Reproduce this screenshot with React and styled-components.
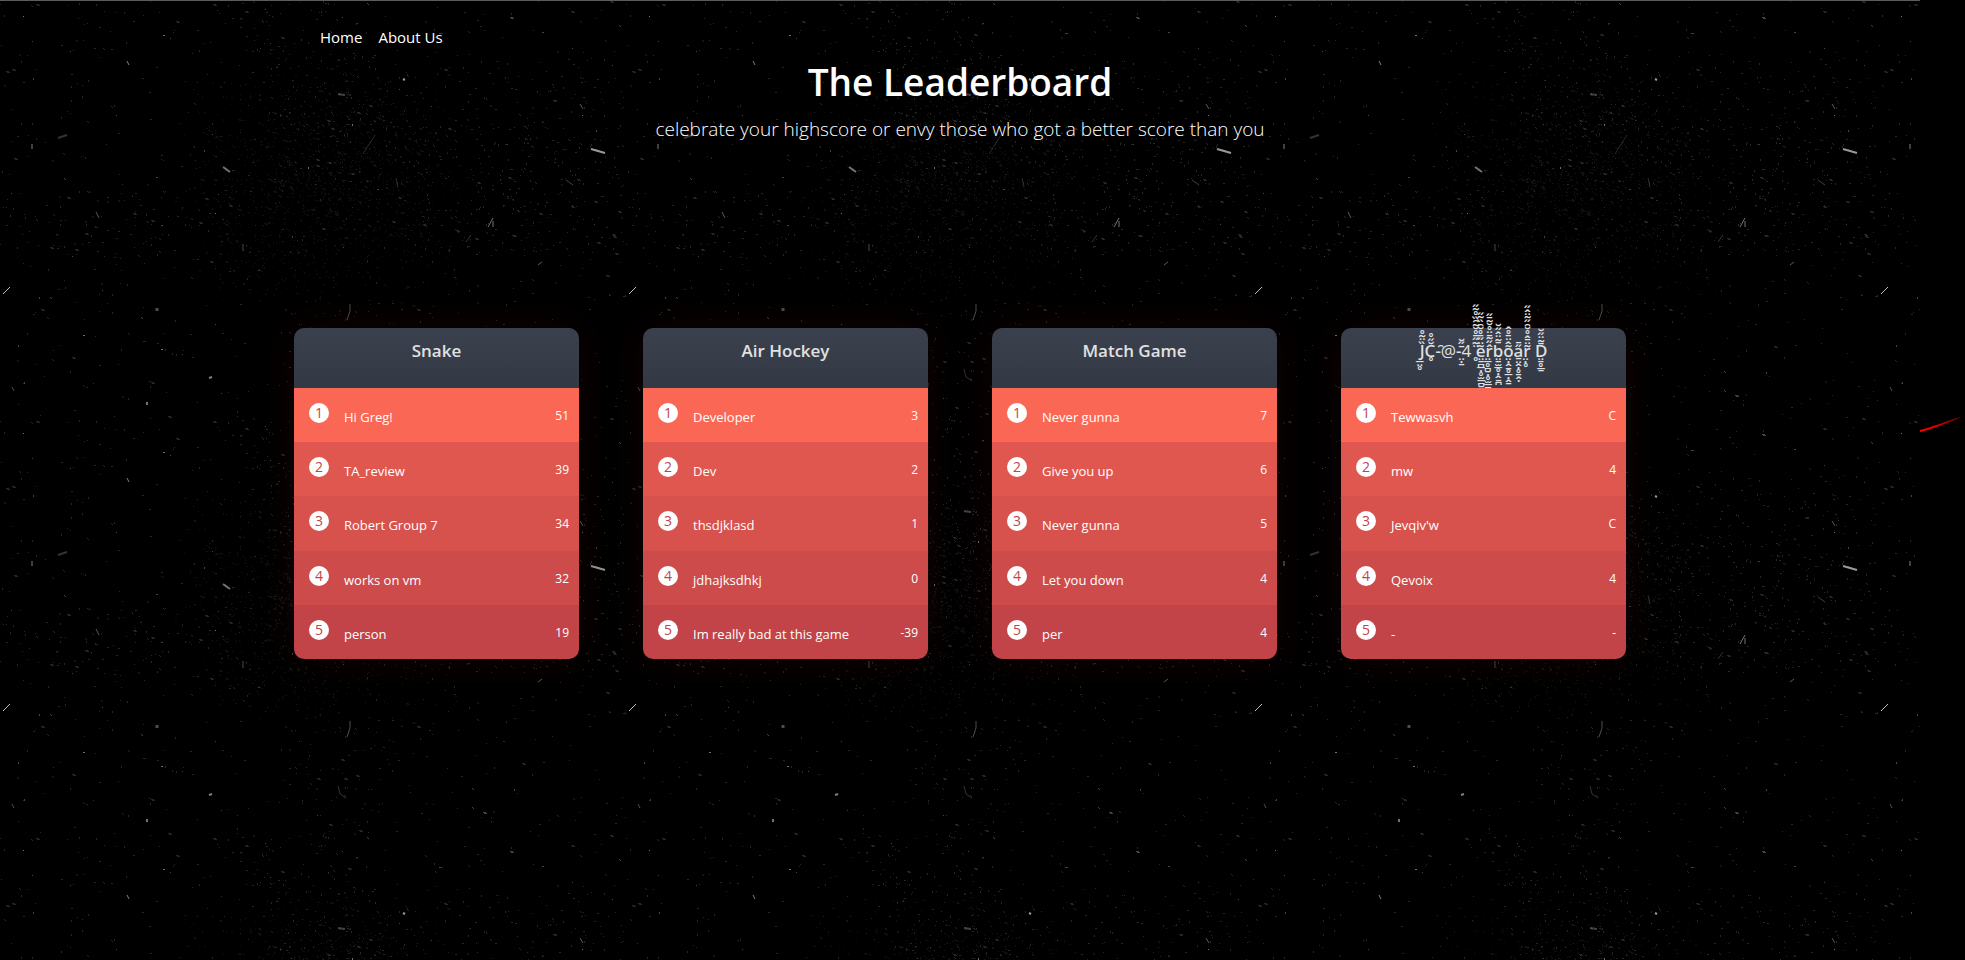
import React from "react";
import styled, { createGlobalStyle } from "styled-components";

const GlobalStyle = createGlobalStyle`
  *, *::before, *::after { box-sizing: border-box; }
  body { margin: 0; background: #000; color: #fff; font-family: "Segoe UI", "Open Sans", "Noto Sans", sans-serif; font-size: 16px; line-height: 24px; }
  #root { isolation: isolate; }
`;

const TILE_W = 626;
const TILE_H = 417;

function seeded(seed) {
  let s = seed;
  return () => {
    s = (s * 1664525 + 1013904223) % 4294967296;
    return s / 4294967296;
  };
}

function specks(seed, count, x, y, w, h, soft) {
  const rnd = seeded(seed);
  const spread = () => (soft ? (rnd() + rnd()) / 2 : rnd());
  let d = "";
  for (let i = 0; i < count; i += 1) {
    const px = Math.floor(x + spread() * w);
    const py = Math.floor(y + spread() * h);
    const shape = rnd();
    if (shape < 0.5) d += `M${px} ${py}h1v1h-1z`;
    else if (shape < 0.68) d += `M${px} ${py}h2v1h-2z`;
    else if (shape < 0.84) d += `M${px} ${py}h1v2h-1z`;
    else if (shape < 0.95) d += `M${px} ${py}h1v1h-1zM${px + 1} ${py + 1}h1v1h-1z`;
    else d += `M${px} ${py}h3v1h-3zM${px + 1} ${py + 1}h3v1h-3z`;
  }
  return d;
}

const DUST = [
  { fill: "#101010", d: specks(45, 1500, 170, 60, 300, 250, true) },
  { fill: "#262626", d: specks(7, 620, 0, 0, TILE_W, TILE_H) },
  { fill: "#262626", d: specks(21, 260, 400, 125, 226, 130) },
  { fill: "#262626", d: specks(27, 90, 360, 60, 266, 80) },
  { fill: "#262626", d: specks(33, 130, 250, 30, 150, 170, true) },
  { fill: "#262626", d: specks(36, 50, 240, 0, 110, 70) },
  { fill: "#262626", d: specks(39, 90, 0, 190, 230, 70) },
  { fill: "#262626", d: specks(41, 60, 280, 310, 120, 107) },
  { fill: "#444444", d: specks(58, 50, 0, 0, TILE_W, TILE_H) },
  { fill: "#707070", d: specks(64, 8, 0, 0, TILE_W, TILE_H) },
];

const SCRATCHES = [
  { d: "M3 293L10 286", o: 0.75, w: 1 },
  { d: "M591 148L605 152", o: 0.6, w: 2 },
  { d: "M223 166L230 171", o: 0.45, w: 2 },
  { d: "M127 60L129 64", o: 0.5, w: 1 },
  { d: "M488 226L493 217M493 226V220", o: 0.45, w: 1 },
  { d: "M347 319L350 310V303", o: 0.3, w: 1 },
  { d: "M32 143V148", o: 0.5, w: 1 },
  { d: "M96 211L99 217", o: 0.35, w: 1 },
  { d: "M157 307V310", o: 0.3, w: 3 },
  { d: "M338 93L345 94", o: 0.25, w: 2 },
  { d: "M580 103L583 108", o: 0.35, w: 1 },
  { d: "M243 250V243", o: 0.25, w: 1 },
  { d: "M209 377L212 376", o: 0.5, w: 2 },
  { d: "M58 137L67 134", o: 0.2, w: 2 },
  { d: "M363 153L375 134", o: 0.15, w: 1 },
  { d: "M566 179L573 184", o: 0.25, w: 1 },
  { d: "M466 241L471 234", o: 0.2, w: 1 },
  { d: "M338 368L340 376L346 380", o: 0.2, w: 1 },
  { d: "M396 177L398 186", o: 0.18, w: 1 },
  { d: "M147 404V401", o: 0.45, w: 2 },
  { d: "M538 264L542 261", o: 0.35, w: 1 },
  { d: "M12 386L14 390", o: 0.3, w: 1 },
  { d: "M403 78L405 79", o: 0.6, w: 2 },
];

const Page = styled.div`
  position: relative;
  min-height: 100vh;
  padding-right: 45px;
`;

const Backdrop = styled.div`
  position: absolute;
  inset: 0 45px 0 0;
  z-index: -1;
  border-top: 1px solid #5c5c5c;

  > svg { display: block; width: 100%; height: 100%; }
`;

const Comet = styled.svg`
  position: absolute;
  right: 0;
  top: 416px;
  width: 45px;
  height: 18px;
`;

const Nav = styled.nav`
  display: flex;
  gap: 16px;
  width: 100%;
  max-width: 1320px;
  margin: 0 auto;
  padding: 25px 20px 0;
`;

const NavLink = styled.a`
  color: #fff;
  font-size: 15px;
  text-decoration: none;
`;

const Heading = styled.header`
  padding-top: 9px;
  text-align: center;
`;

const Title = styled.h1`
  margin: 0 0 8px;
  font-size: 37px;
  font-weight: 600;
  line-height: 48px;
`;

const Lead = styled.p`
  margin: 0;
  font-size: 19px;
  font-weight: 300;
  line-height: 30px;
`;

const Boards = styled.main`
  display: flex;
  justify-content: center;
  gap: 64px;
  padding: 184px 20px 60px;
`;

const Board = styled.section`
  flex: 0 1 285px;
  border-radius: 10px;
  box-shadow: 0 0 40px rgba(62, 9, 11, 0.3);
`;

const BoardHead = styled.div`
  height: 60px;
  padding-top: 11px;
  border-radius: 10px 10px 0 0;
  background: linear-gradient(to bottom, #3a404d, #333944);
`;

const BoardTitle = styled.h2`
  margin: 0;
  color: #e1e1e1;
  font-size: 17px;
  font-weight: ${(p) => (p.$plain ? 500 : 600)};
  line-height: 24px;
  text-align: center;
`;

const Rows = styled.ol`
  position: relative;
  display: grid;
  grid-template-rows: repeat(5, 1fr);
  height: 271px;
  margin: 0;
  padding: 0;
  list-style: none;
  overflow: hidden;
  border-radius: 0 0 10px 10px;
`;

const SHADES = ["#fa6855", "#e0574f", "#d7514d", "#cd4b4b", "#c24448"];

const Row = styled.li`
  display: flex;
  align-items: center;
  padding: 0 10px 0 15px;
  background: ${(p) => SHADES[p.$rank - 1]};
  color: #fff;
`;

const Rank = styled.span`
  flex: none;
  width: 20px;
  height: 20px;
  margin: 0 15px 4px 0;
  border-radius: 50%;
  background: #fff;
  color: #c24448;
  font-size: 14px;
  line-height: 20px;
  text-align: center;
`;

const Player = styled.span`
  flex: 1;
  min-width: 0;
  padding-top: 4px;
  font-size: 13px;
  font-weight: 500;
  line-height: 20px;
`;

const Score = styled.span`
  padding-top: 2px;
  font-size: 12px;
  font-weight: 500;
  line-height: 20px;
`;

const GLITCH =
  "J\u030f\u0308\u0303\u0332\u0324\u030a\u0325C\u0306\u030b\u030a\u0325-\u0311@-\u0304\u030b\u0306\u0324\u0323\u0331" +
  "4\u00a0\u0308\u0303\u030b\u0304\u030a\u0306\u0303\u0311\u030f\u030a\u0303\u030b\u0325" +
  "e\u0303\u0308\u030b\u0304\u030a\u0306\u0311\u030f\u0303\u030b\u0324\u0331\u032a\u0332\u0323\u0325\u032b\u0332\u032a\u0331\u0325" +
  "r\u0302\u030b\u0303\u0304\u0308\u030a\u0306\u0303\u0304\u030b\u0324\u0332\u0325\u032a\u0331\u0323\u0325\u032b\u0332\u032a" +
  "b\u0304\u0303\u0308\u0302\u030b\u0306\u0324\u0331\u032b\u0332\u0325\u0323\u032d\u0331\u032a" +
  "o\u0303\u0302\u0308\u0304\u030a\u0302\u0324\u0323\u032d\u0331\u0325\u0332\u0323\u032d\u0331" +
  "a\u030b\u0304\u0331\u0324\u032d\u0323\u0325\u0331\u032d\u0323" +
  "r\u0303\u0308\u0304\u0302\u030a\u0306\u0311\u030b\u0303\u0308\u0302\u030b\u0324\u0323\u0325 " +
  "D\u0304\u0303\u0308\u030b\u0306\u0324\u0331\u0325\u0332\u0331";

const BOARDS = [
  { name: "Snake", rows: [["Hi Greg!", "51"], ["TA_review", "39"], ["Robert Group 7", "34"], ["works on vm", "32"], ["person", "19"]] },
  { name: "Air Hockey", rows: [["Developer", "3"], ["Dev", "2"], ["thsdjklasd", "1"], ["jdhajksdhkj", "0"], ["Im really bad at this game", "-39"]] },
  { name: "Match Game", rows: [["Never gunna", "7"], ["Give you up", "6"], ["Never gunna", "5"], ["Let you down", "4"], ["per", "4"]] },
  { name: GLITCH, plain: true, rows: [["Tewwasvh", "C"], ["mw", "4"], ["Jevqiv'w", "C"], ["Qevoix", "4"], ["-", "-"]] },
];

function Texture() {
  return (
    <Backdrop aria-hidden="true">
      <svg>
        <defs>
          <pattern id="dust" width={TILE_W} height={TILE_H} patternUnits="userSpaceOnUse">
            {DUST.map((layer, i) => (
              <path key={i} d={layer.d} fill={layer.fill} shapeRendering="crispEdges" />
            ))}
            {SCRATCHES.map((s) => (
              <path key={s.d} d={s.d} stroke="#fff" strokeOpacity={s.o} strokeWidth={s.w} fill="none" />
            ))}
          </pattern>
        </defs>
        <rect width="100%" height="100%" fill="url(#dust)" />
      </svg>
    </Backdrop>
  );
}

export default function App() {
  return (
    <Page>
      <GlobalStyle />
      <Texture />
      <Comet viewBox="0 0 45 18" aria-hidden="true">
        <defs>
          <linearGradient id="tail" x1="0" x2="1">
            <stop offset="0" stopColor="#f00" />
            <stop offset="0.4" stopColor="#d00" />
            <stop offset="1" stopColor="#500" />
          </linearGradient>
        </defs>
        <path d="M0 14C13 11 26 5 40 1V2C27 7 14 13 0 16Z" fill="url(#tail)" />
      </Comet>
      <Nav>
        <NavLink href="#home">Home</NavLink>
        <NavLink href="#about">About Us</NavLink>
      </Nav>
      <Heading>
        <Title>The Leaderboard</Title>
        <Lead>celebrate your highscore or envy those who got a better score than you</Lead>
      </Heading>
      <Boards>
        {BOARDS.map((board) => (
          <Board key={board.name}>
            <BoardHead>
              <BoardTitle $plain={board.plain}>{board.name}</BoardTitle>
            </BoardHead>
            <Rows>
              {board.rows.map(([player, score], i) => (
                <Row key={i} $rank={i + 1}>
                  <Rank>{i + 1}</Rank>
                  <Player>{player}</Player>
                  <Score>{score}</Score>
                </Row>
              ))}
            </Rows>
          </Board>
        ))}
      </Boards>
    </Page>
  );
}
